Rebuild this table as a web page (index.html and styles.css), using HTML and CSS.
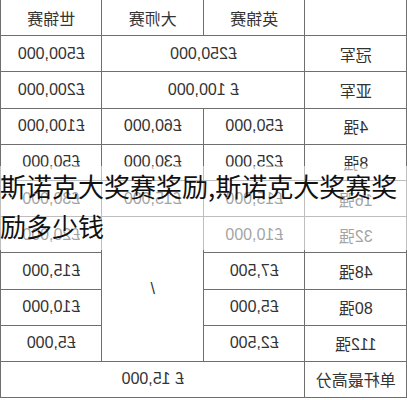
FILE: index.html
```html
<!DOCTYPE html>
<html lang="zh">
<head>
<meta charset="utf-8">
<title>斯诺克大奖赛奖励</title>
<link rel="stylesheet" href="styles.css">
</head>
<body>
<div class="page">
  <table class="prize">
    <tr><td></td><td>英锦赛</td><td>大师赛</td><td>世锦赛</td></tr>
    <tr><td>冠军</td><td colspan="2">£250,000</td><td>£500,000</td></tr>
    <tr><td>亚军</td><td colspan="2">£ 100,000</td><td>£200,000</td></tr>
    <tr><td>4强</td><td>£50,000</td><td>£60,000</td><td>£100,000</td></tr>
    <tr><td>8强</td><td>£25,000</td><td>£30,000</td><td>£50,000</td></tr>
    <tr><td>16强</td><td>£15,000</td><td>£15,000</td><td>£30,000</td></tr>
    <tr><td>32强</td><td>£10,000</td><td rowspan="4">/</td><td>£20,000</td></tr>
    <tr><td>48强</td><td>£7,500</td><td>£15,000</td></tr>
    <tr><td>80强</td><td>£5,000</td><td>£10,000</td></tr>
    <tr><td>112强</td><td>£2,500</td><td>£5,000</td></tr>
    <tr><td>单杆最高分</td><td colspan="3">£ 15,000</td></tr>
  </table>
  <div class="caption">斯诺克大奖赛奖励,斯诺克大奖赛奖励多少钱</div>
</div>
</body>
</html>
```
FILE: styles.css
```css
html, body {
  margin: 0;
  padding: 0;
  background: #fff;
}
body {
  font-family: "Liberation Sans", "Noto Sans CJK SC", sans-serif;
}
.page {
  position: relative;
  width: 407px;
  height: 400px;
  overflow: hidden;
}
.prize {
  border-collapse: collapse;
  table-layout: fixed;
  width: 407px;
  margin-top: -1px;
  transform: scaleX(-1);
}
.prize td {
  border: 1px solid #6f6f6f;
  height: 35.2px;
  padding: 0;
  text-align: center;
  vertical-align: middle;
  font-size: 16px;
  color: #333;
}
.caption {
  position: absolute;
  left: 0;
  top: 166px;
  width: 407px;
  padding-bottom: 4px;
  font-family: "Noto Sans CJK SC", sans-serif;
  font-size: 26px;
  line-height: 40px;
  color: #111;
  background: rgba(255, 255, 255, 0.55);
}
```
